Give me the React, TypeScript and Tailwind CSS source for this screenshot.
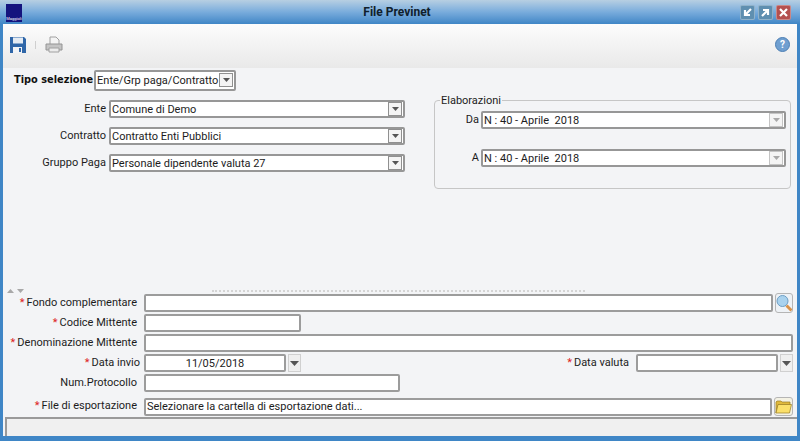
import type { ReactNode } from 'react'

function Arrow({ dim }: { dim?: boolean }) {
  return (
    <svg width="7" height="4" viewBox="0 0 7 4">
      <path d="M0 0h7L3.5 4z" fill={dim ? '#a8a8a8' : '#555'} />
    </svg>
  )
}

function Combo({ value, width, dim, className = '' }: { value: string; width?: string; dim?: boolean; className?: string }) {
  return (
    <div className={`flex items-center h-[18px] bg-white border-2 border-[#979797] rounded-[2px] px-px ${width ?? 'flex-1'} ${className}`}>
      <span className="flex-1 whitespace-pre leading-none">{value}</span>
      <span className={`flex items-center justify-center w-[14px] h-[14px] bg-[#f4f4f4] border ${dim ? 'border-[#c4c4c4]' : 'border-[#909090]'}`}>
        <Arrow dim={dim} />
      </span>
    </div>
  )
}

function Input({ value, className = '' }: { value?: string; className?: string }) {
  return (
    <div className={`flex items-center h-[18px] bg-white border-2 border-[#9c9c9c] rounded-[2px] px-px leading-none whitespace-nowrap ${className}`}>
      {value}
    </div>
  )
}

function Label({ children, required, flush }: { children: ReactNode; required?: boolean; flush?: boolean }) {
  return (
    <div className={`w-[137px] shrink-0 text-right whitespace-nowrap ${flush ? '' : 'pr-[3px]'}`}>
      {required && <span className="text-[#d22] mr-[2px]">*</span>}
      {children}
    </div>
  )
}

function DropBtn() {
  return (
    <span className="flex items-center justify-center w-[13px] h-[18px] bg-[#efefef] border border-[#d0d0d0]">
      <svg width="9" height="5" viewBox="0 0 9 5"><path d="M0 0h9L4.5 5z" fill="#555" /></svg>
    </span>
  )
}

function WinBtn({ bg, d }: { bg: string; d: string }) {
  return (
    <span className={`flex items-center justify-center w-[15px] h-[15px] rounded-[2px] border border-[#ffffff50] ${bg}`}>
      <svg width="11" height="11" viewBox="0 0 11 11">
        <path d={d} fill="none" stroke="#fff" strokeWidth="2.2" />
      </svg>
    </span>
  )
}

export default function App() {
  return (
    <div className="w-[800px] h-[441px] flex flex-col overflow-hidden bg-[#3f86c6] text-[11px] text-[#1c1c1c] font-['Roboto','Liberation_Sans',sans-serif]">
      {/* title bar */}
      <div className="h-[24px] shrink-0 flex items-center pl-[6px] pr-[9px] bg-gradient-to-b from-[#b7cfe2] via-[#79acdc] to-[#3f86c6]">
        <div className="w-[16px] h-[18px] mt-px bg-[#14147e] flex items-end justify-center">
          <span className="text-[4px] leading-[6px] text-white">Maggioli</span>
        </div>
        <div className="flex-1 text-center font-bold text-[12px] text-[#10202c] ml-[32px]">File Previnet</div>
        <div className="flex gap-[3px]">
          <WinBtn bg="bg-[#5f8fb0]" d="M9 2 3 8M3 3v5h5" />
          <WinBtn bg="bg-[#5f8fb0]" d="M2 9l6-6M3 3h5v5" />
          <WinBtn bg="bg-[#b4504f]" d="M2 2l7 7M9 2l-7 7" />
        </div>
      </div>

      <div className="flex-1 flex flex-col mx-[3px] mb-[5px] bg-[#f3f4f6] min-h-0">
        {/* toolbar */}
        <div className="h-[44px] shrink-0 flex items-center pl-[7px] pr-[7px] pb-[3px] bg-gradient-to-b from-[#fcfcfc] to-[#e9e9e9]">
          <svg width="16" height="17" viewBox="0 0 16 17">
            <path d="M0 1h14l2 2v14H0z" fill="#2f66a8" />
            <rect x="3" y="1.5" width="10" height="6" fill="#e4ebf3" />
            <rect x="3" y="11" width="9" height="6" fill="#f2f4f7" />
            <rect x="9" y="12" width="2" height="4" fill="#2f66a8" />
          </svg>
          <span className="w-px h-[8px] bg-[#cfcfcf] ml-[9px] mr-[9px]" />
          <svg width="18" height="17" viewBox="0 0 18 17">
            <path d="M5 1h6l3 3v5H5z" fill="#f4f4f4" stroke="#a0a0a0" />
            <path d="M1 8h16v6H1z" fill="#c4c4c4" stroke="#949494" />
            <path d="M4 12h10v4H4z" fill="#ececec" stroke="#a0a0a0" />
          </svg>
          <span className="flex-1" />
          <span className="w-[15px] h-[15px] rounded-full bg-[#6f9fd0] border border-[#4c7fb4] flex items-center justify-center text-[10px] font-bold text-white leading-none">?</span>
        </div>

        {/* selection type */}
        <div className="flex items-center h-[22px] mt-px pl-[11px] gap-px">
          <span className="font-['DejaVu_Sans'] font-bold text-[9.8px] text-[#111] whitespace-nowrap">Tipo selezione</span>
          <Combo value="Ente/Grp paga/Contratto" width="w-[142px]" className="h-[21px]" />
        </div>

        {/* upper panel */}
        <div className="flex h-[189px] mt-[8px]">
          <div className="w-[402px] pt-px flex flex-col gap-[9px]">
            <div className="flex items-center gap-[3px]">
              <div className="w-[103px] text-right">Ente</div>
              <Combo value="Comune di Demo" />
            </div>
            <div className="flex items-center gap-[3px]">
              <div className="w-[103px] text-right">Contratto</div>
              <Combo value="Contratto Enti Pubblici" />
            </div>
            <div className="flex items-center gap-[3px]">
              <div className="w-[103px] text-right">Gruppo Paga</div>
              <Combo value="Personale dipendente valuta 27" />
            </div>
          </div>
          <div className="relative ml-[29px] w-[357px] h-[89px] mt-px border border-[#c6c6c6] rounded-[4px] pt-[10px] pr-[4px] flex flex-col gap-[20px]">
            <span className="absolute -top-[8px] left-[5px] px-px bg-[#f3f4f6]">Elaborazioni</span>
            <div className="flex items-center gap-[2px]">
              <div className="w-[44px] text-right">Da</div>
              <Combo dim value="N : 40 - Aprile  2018" />
            </div>
            <div className="flex items-center gap-[2px]">
              <div className="w-[44px] text-right">A</div>
              <Combo dim value="N : 40 - Aprile  2018" />
            </div>
          </div>
        </div>

        {/* splitter */}
        <div className="flex items-center h-[6px] pl-[4px]">
          <span className="flex gap-[3px] w-[205px]">
            <span className="rotate-180"><Arrow dim /></span>
            <Arrow dim />
          </span>
          <span className="w-[373px] border-t-2 border-dotted border-[#d4d4d4]" />
        </div>

        {/* lower form */}
        <div className="flex flex-col gap-[2px] pr-[4px]">
          <div className="flex items-center gap-[4px]">
            <Label required>Fondo complementare</Label>
            <Input className="flex-1" />
            <span className="-ml-[2px] -my-px w-[18px] h-[20px] border border-[#b5b5b5] rounded-[3px] bg-[#eef2f6] flex items-center justify-center">
              <svg width="16" height="18" viewBox="0 0 16 18">
                <circle cx="6.5" cy="7" r="5.5" fill="#a9d2ee" stroke="#6d9ec4" />
                <path d="M10.5 11.5l5 5" stroke="#d8924a" strokeWidth="3" />
              </svg>
            </span>
          </div>
          <div className="flex items-center gap-[4px]">
            <Label required>Codice Mittente</Label>
            <Input className="w-[157px]" />
          </div>
          <div className="flex items-center gap-[4px]">
            <Label required>Denominazione Mittente</Label>
            <Input className="flex-1" />
          </div>
          <div className="flex items-center gap-[4px]">
            <Label required flush>Data invio</Label>
            <Input value="11/05/2018" className="w-[142px] justify-center" />
            <span className="-ml-[2px]"><DropBtn /></span>
            <span className="flex-1 text-right pr-[3px] whitespace-nowrap">
              <span className="text-[#d22] mr-[2px]">*</span>Data valuta
            </span>
            <Input className="w-[142px]" />
            <span className="-ml-[2px]"><DropBtn /></span>
          </div>
          <div className="flex items-center gap-[4px]">
            <Label>Num.Protocollo</Label>
            <Input className="w-[256px]" />
          </div>
          <div className="flex items-center gap-[4px] mt-[3px]">
            <Label required>File di esportazione</Label>
            <Input value="Selezionare la cartella di esportazione dati..." className="flex-1" />
            <span className="-ml-[2px] w-[19px] h-[19px] border border-[#b5b5b5] rounded-[3px] bg-[#f4f2e4] flex items-center justify-center">
              <svg width="17" height="14" viewBox="0 0 17 14">
                <path d="M1 2l1-1h4l1 1h8v3H3L1 13z" fill="#e0b93c" stroke="#9a7d24" strokeWidth=".7" />
                <path d="M3 4.500h13.500l-2 8.500H1z" fill="#fbe06a" stroke="#9a7d24" strokeWidth=".7" />
              </svg>
            </span>
          </div>
        </div>

        {/* status bar */}
        <div className="flex-1 mt-px ml-[2px] border-t-2 border-l-2 border-[#9a9a9a] bg-[#f0f0f0]" />
      </div>
    </div>
  )
}
